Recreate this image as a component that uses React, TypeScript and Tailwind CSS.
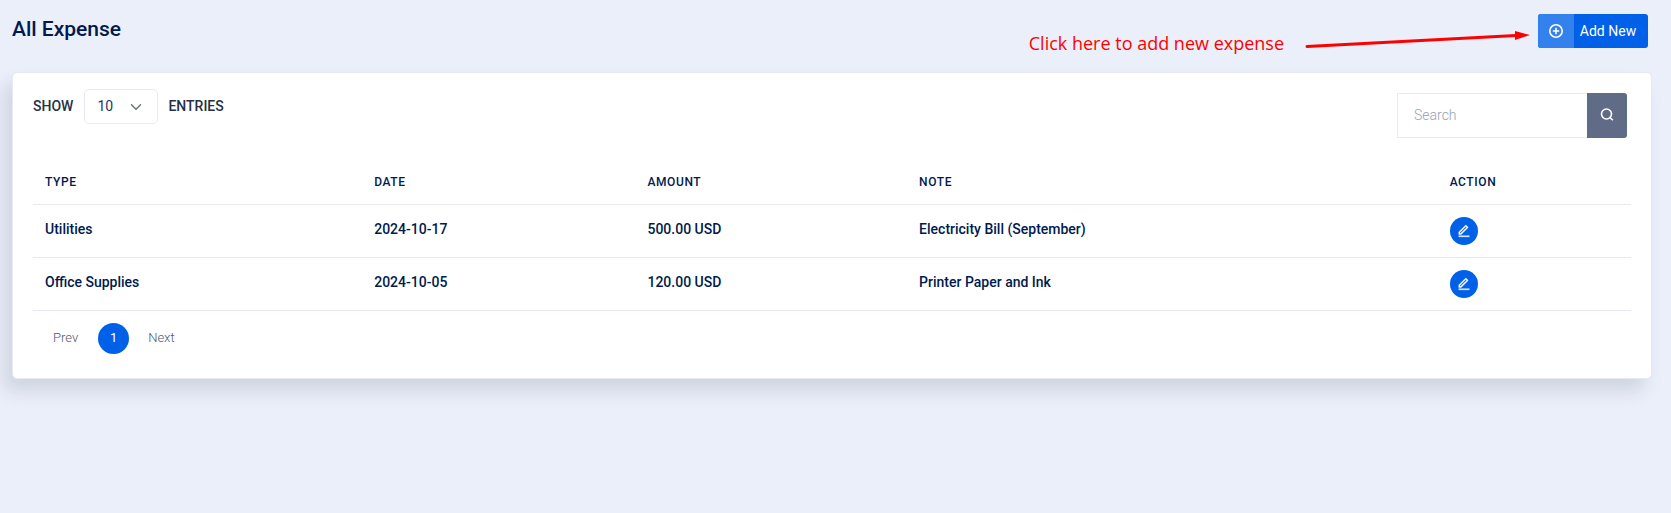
import React from "react";

type Expense = { type: string; date: string; amount: string; note: string };

const expenses: Expense[] = [
  { type: "Utilities", date: "2024-10-17", amount: "500.00 USD", note: "Electricity Bill (September)" },
  { type: "Office Supplies", date: "2024-10-05", amount: "120.00 USD", note: "Printer Paper and Ink" },
];

function PlusCircleIcon() {
  return (
    <svg viewBox="0 0 16 16" className="size-4" fill="none" stroke="currentColor" aria-hidden="true">
      <circle cx="8" cy="8" r="6.2" strokeWidth="1.6" />
      <path d="M8 4.800v6.400M4.800 8h6.400" strokeWidth="1.6" />
    </svg>
  );
}

function SearchIcon() {
  return (
    <svg viewBox="0 0 14 14" className="size-3.5" fill="none" stroke="currentColor" strokeWidth="1.6" aria-hidden="true">
      <circle cx="6.5" cy="6" r="5" />
      <path d="M9.500 9 12.800 12.300" />
    </svg>
  );
}

function EditIcon() {
  return (
    <svg viewBox="0 0 24 24" className="size-3.5" fill="currentColor" stroke="currentColor" strokeWidth="0.6" aria-hidden="true">
      <path d="M6.414 16 16.556 5.858l-1.414-1.414L5 14.586V16h1.414zm.829 2H3v-4.243L14.435 2.322a1 1 0 0 1 1.414 0l2.829 2.829a1 1 0 0 1 0 1.414L7.243 18zM3 20h18v2H3v-2z" />
    </svg>
  );
}

function ChevronIcon() {
  return (
    <svg viewBox="0 0 16 16" className="pointer-events-none absolute right-4 size-3" fill="none" stroke="#6b7280" strokeWidth="2" strokeLinecap="round" strokeLinejoin="round" aria-hidden="true">
      <path d="m2 5 6 6 6-6" />
    </svg>
  );
}

function Arrow() {
  return (
    <svg viewBox="0 0 226 18" className="h-[18px] w-[226px]" aria-hidden="true">
      <path d="M3 15.500 212 4.500" stroke="#ff0000" strokeWidth="3" strokeLinecap="round" />
      <path d="M211 0 226 4 211 9z" fill="#ff0000" />
    </svg>
  );
}

export default function App() {
  return (
    <main className="min-h-screen bg-[#ebeffa] pr-[19px] pl-3 font-[Roboto,sans-serif] text-[#001a4e]">
      <header className="flex h-[72px] items-start justify-between pt-3.5 pr-1">
        <h1 className="text-[21px] leading-[30px] font-medium">All Expense</h1>
        <div className="flex items-start">
          <p className="mr-5 pt-4 font-['Open_Sans',sans-serif] text-lg leading-[26px] font-normal text-[#ff0000]">
            Click here to add new expense
          </p>
          <div className="mr-2 pt-[17px]">
            <Arrow />
          </div>
          <button type="button" className="flex h-[34px] w-[110px] overflow-hidden rounded-[3px] bg-[#0061e8] text-sm text-white">
            <span className="flex h-full w-9 items-center justify-center bg-[#3381ed]">
              <PlusCircleIcon />
            </span>
            <span className="flex h-full flex-1 items-center justify-center pr-1.5">Add New</span>
          </button>
        </div>
      </header>

      <section className="rounded-[5px] border border-[#e6e8f2] bg-white px-5 pt-4 pb-6 shadow-[-8px_12px_18px_0_rgba(25,42,70,0.13)]">
        <div className="flex items-start justify-between pr-1">
          <div className="flex items-center text-sm font-medium text-[#262f45]">
            <label htmlFor="page-size" className="pb-0.5">SHOW</label>
            <span className="relative mr-2.5 ml-[11px] flex items-center">
              <select id="page-size" defaultValue="10" className="h-[35px] w-[74px] appearance-none rounded-[5px] border border-[#e8ebf5] bg-white pb-0.5 pl-3 text-sm font-normal text-[#1f3560]">
                <option>10</option>
                <option>25</option>
                <option>50</option>
              </select>
              <ChevronIcon />
            </span>
            <span className="pb-0.5">ENTRIES</span>
          </div>
          <form className="flex pt-1" role="search" onSubmit={(e) => e.preventDefault()}>
            <input type="search" aria-label="Search" placeholder="Search" className="h-[45px] w-[190px] border border-r-0 border-[#e8ebf5] bg-white px-4 pb-0.5 text-sm font-light placeholder:text-[#98a1b7]" />
            <button type="submit" aria-label="Search" className="flex h-[45px] w-10 items-center justify-center rounded-r-[3px] bg-[#5f6b87] pb-0.5 text-white">
              <SearchIcon />
            </button>
          </form>
        </div>

        <table className="mt-5 w-full table-fixed text-left">
          <thead>
            <tr className="h-[46px] border-b border-[#e6e8f2] text-xs tracking-wider">
              <th className="w-[20.6%] px-3 pt-0.5 font-medium">TYPE</th>
              <th className="w-[17.1%] px-3 pt-0.5 font-medium">DATE</th>
              <th className="w-[17%] px-3 pt-0.5 font-medium">AMOUNT</th>
              <th className="w-[33.2%] px-3 pt-0.5 font-medium">NOTE</th>
              <th className="px-3 pt-0.5 font-medium">ACTION</th>
            </tr>
          </thead>
          <tbody>
            {expenses.map((e) => (
              <tr key={e.date} className="border-b border-[#e6e8f2] align-top text-sm leading-6 font-medium">
                <td className="p-3">{e.type}</td>
                <td className="p-3">{e.date}</td>
                <td className="p-3">{e.amount}</td>
                <td className="p-3">{e.note}</td>
                <td className="p-3">
                  <button type="button" aria-label={`Edit ${e.type}`} className="flex size-7 items-center justify-center rounded-full bg-[#0061e8] text-white">
                    <EditIcon />
                  </button>
                </td>
              </tr>
            ))}
          </tbody>
        </table>

        <nav aria-label="Pagination" className="flex items-center pt-3 pl-5 text-[13px] font-light text-[#4a5878]">
          <button type="button">Prev</button>
          <button type="button" aria-current="page" className="mr-[19px] ml-5 size-[31px] rounded-full bg-[#0061e8] font-normal text-white">
            1
          </button>
          <button type="button">Next</button>
        </nav>
      </section>
    </main>
  );
}
